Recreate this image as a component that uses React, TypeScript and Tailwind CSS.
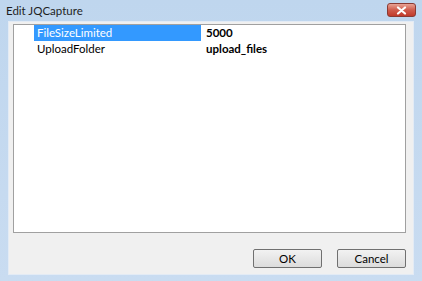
const rows = [
  { name: "FileSizeLimited", value: "5000", selected: true },
  { name: "UploadFolder", value: "upload_files", selected: false },
];

const App = () => {
  return (
    <div
      className="w-[422px] h-[281px] flex flex-col bg-gradient-to-b from-[#bfd6ee] to-[#c9dcf1] text-[11.5px] text-black"
      style={{ fontFamily: 'Lato, "Noto Sans", sans-serif' }}
    >
      {/* title bar */}
      <div className="h-[21px] flex items-start justify-between pl-[6px] pr-[6px]">
        <span className="mt-[3px] text-[11.5px] leading-[15px] text-[#1e1e1e]">
          Edit JQCapture
        </span>
        <button className="mt-[3px] w-[29px] h-[14px] rounded-[3px] border border-[#8a3a33] bg-gradient-to-b from-[#e7a295] via-[#cf5b4c] to-[#c1392a] flex items-center justify-center">
          <svg width="11" height="9" viewBox="0 0 11 9">
            <path
              d="M2 1.5 L9 7.5 M9 1.5 L2 7.5"
              stroke="#fff"
              strokeWidth="2.2"
              strokeLinecap="round"
            />
          </svg>
        </button>
      </div>

      {/* client area */}
      <div className="flex-1 ml-[8px] mr-[8px] mb-[6px] bg-[#f0f0f0] border border-[#e3ebf5] flex flex-col pl-[4px] pr-[7px] pt-[2px]">
        <div className="h-[209px] bg-white border border-[#a0a0a0] flex">
          <div className="w-[20px] bg-white" />
          <div className="flex-1 flex flex-col">
            {rows.map((row) => (
              <div key={row.name} className="h-[16px] flex leading-[16px]">
                <div
                  className={
                    row.selected
                      ? "w-[167px] pl-[3px] bg-[#3399ff] text-white"
                      : "w-[167px] pl-[3px] text-black"
                  }
                >
                  {row.name}
                </div>
                <div className="flex-1 pl-[5px] font-bold">{row.value}</div>
              </div>
            ))}
          </div>
        </div>

        <div className="flex justify-end gap-[15px] mt-[16px]">
          <button className="w-[69px] h-[19px] rounded-[2px] border border-[#707070] bg-gradient-to-b from-[#f2f2f2] to-[#dcdcdc] text-[11.5px] leading-[16px]">
            OK
          </button>
          <button className="w-[69px] h-[19px] rounded-[2px] border border-[#707070] bg-gradient-to-b from-[#f2f2f2] to-[#dcdcdc] text-[11.5px] leading-[16px]">
            Cancel
          </button>
        </div>
      </div>
    </div>
  );
};

export default App;
